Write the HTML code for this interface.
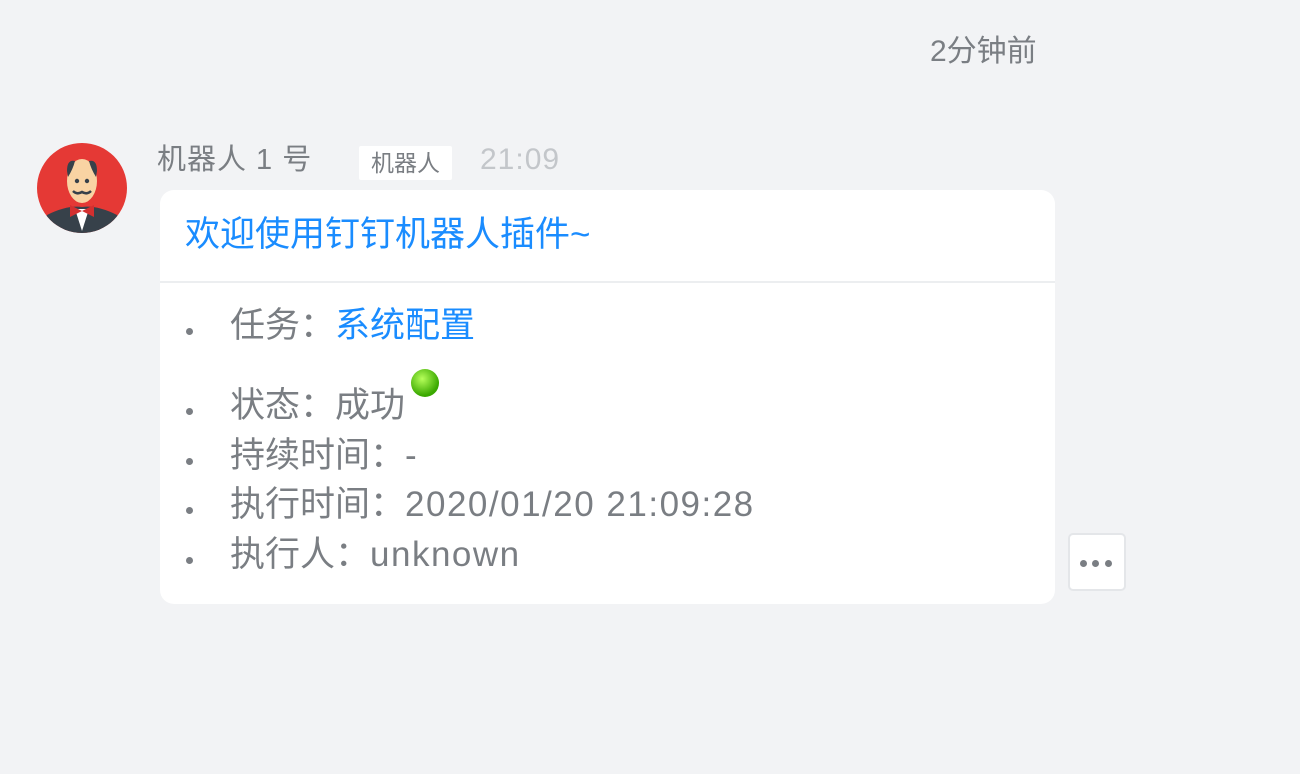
<!DOCTYPE html>
<html><head><meta charset="utf-8"><style>
body{margin:0;width:1300px;height:774px;background:#f2f3f5;font-family:"Liberation Sans","Noto Sans CJK SC",sans-serif;position:relative;overflow:hidden;color:#7a7e83}
.abs{position:absolute;white-space:nowrap}
.card{position:absolute;left:160px;top:190px;width:895px;height:414px;background:#fff;border-radius:14px}
.hd{position:absolute;left:0;top:0;width:895px;height:91px;border-bottom:2px solid #eceef0}
.li{position:absolute;left:70px;font-size:35px;line-height:40px;color:#7a7e83}
.li:before{content:"";position:absolute;left:-44px;top:22px;width:7px;height:7px;border-radius:50%;background:#7a7e83}
.blue{color:#1a8cff}
.lt{letter-spacing:1.5px}
</style></head><body>
<div class="abs" style="left:930px;top:32px;font-size:30px;line-height:40px;color:#7a7e83">2分钟前</div>
<svg class="abs" style="left:37px;top:143px" width="90" height="90" viewBox="0 0 90 90">
<defs><clipPath id="c"><circle cx="45" cy="45" r="45"/></clipPath></defs>
<g clip-path="url(#c)">
<rect width="90" height="90" fill="#e53935"/>
<path d="M0 90 L10 72 Q30 62 45 64 Q60 62 80 72 L90 90Z" fill="#37414a"/>
<path d="M38 66 L45 88 L52 66Z" fill="#fff"/>
<path d="M33 62 L45 68 L57 62 L57 74 L45 68 L33 74Z" fill="#d32f2f"/>
<ellipse cx="45" cy="38" rx="15" ry="22" fill="#f9d3a3"/>
<path d="M30 28 Q30 16 38 18 Q36 26 31 34Z M60 28 Q60 16 52 18 Q54 26 59 34Z" fill="#37414a"/>
<circle cx="40" cy="38" r="2.2" fill="#37414a"/><circle cx="50" cy="38" r="2.2" fill="#37414a"/>
<path d="M36 48 Q40 52 45 49 Q50 52 54 48" stroke="#37414a" stroke-width="2.5" fill="none"/>
</g></svg>
<div class="abs" style="left:157px;top:141px;font-size:29px;line-height:38px;color:#7a7e83;letter-spacing:1px">机器人 1 号</div>
<div class="abs" style="left:359px;top:146px;width:93px;height:34px;background:#fff;border-radius:2px;font-size:23px;line-height:34px;text-align:center;color:#7a7e83">机器人</div>
<div class="abs" style="left:480px;top:141px;font-size:30px;line-height:38px;color:#c3c6ca;letter-spacing:1px">21:09</div>
<div class="card">
<div class="hd"><div class="abs blue" style="left:25px;top:25px;font-size:35px;line-height:40px">欢迎使用钉钉机器人插件~</div></div>
<div class="li" style="top:116px">任务：<span class="blue">系统配置</span></div>
<div class="li" style="top:196px">状态：成功</div>
<svg class="abs" style="left:250px;top:178px" width="32" height="32"><defs><radialGradient id="g" cx="40%" cy="35%" r="60%"><stop offset="0" stop-color="#b6ff5a"/><stop offset="1" stop-color="#3aa800"/></radialGradient></defs><circle cx="15" cy="15" r="14" fill="url(#g)"/></svg>
<div class="li" style="top:246px">持续时间：<span class="lt">-</span></div>
<div class="li" style="top:295px">执行时间：<span class="lt">2020/01/20 21:09:28</span></div>
<div class="li" style="top:345px">执行人：<span class="lt">unknown</span></div>
</div>
<div class="abs" style="left:1068px;top:533px;width:54px;height:54px;background:#fff;border:2px solid #e4e6e9;border-radius:5px"></div>
<div class="abs" style="left:1080px;top:560px;width:7px;height:7px;border-radius:50%;background:#7a7e83;box-shadow:12px 0 #7a7e83,25px 0 #7a7e83"></div>
</body></html>
